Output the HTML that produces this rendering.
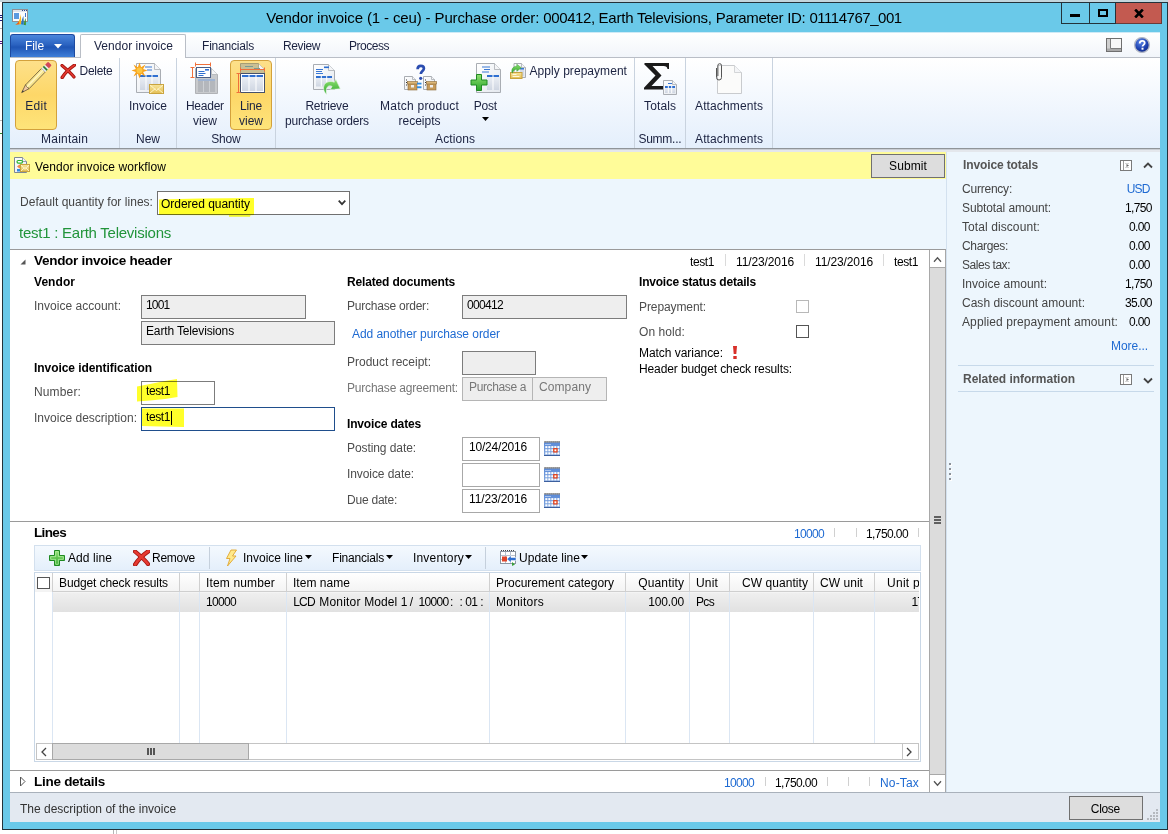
<!DOCTYPE html>
<html lang="en"><head><meta charset="utf-8"><title>Vendor invoice</title>
<style>
html,body{margin:0;padding:0;background:#fff;}
body{width:1168px;height:834px;overflow:hidden;font-family:"Liberation Sans",sans-serif;}
#root{position:relative;width:1168px;height:834px;overflow:hidden;}
#root>div,#root>svg{position:absolute;box-sizing:border-box;}
.t{position:absolute;white-space:pre;}

</style></head>
<body>
<div id="root">
<div style="left:0px;top:0px;width:1168px;height:834px;background:#fff"></div>
<div style="left:0px;top:0px;width:1168px;height:2px;background:#c3d6dd"></div>
<div style="left:0px;top:15px;width:2px;height:1px;background:#1c1c80"></div>
<div style="left:0px;top:17px;width:2px;height:1px;background:#1c1c80"></div>
<div style="left:0px;top:20px;width:2px;height:1px;background:#1c1c80"></div>
<div style="left:0px;top:28px;width:2px;height:1px;background:#b0b0b0"></div>
<div style="left:0px;top:41px;width:2px;height:1px;background:#5a1a8a"></div>
<div style="left:0px;top:43px;width:2px;height:1px;background:#5a1a8a"></div>
<div style="left:0px;top:120px;width:2px;height:1px;background:#b8b8b8"></div>
<div style="left:0px;top:133px;width:2px;height:1px;background:#2a8a2a"></div>
<div style="left:113px;top:830px;width:1px;height:4px;background:#b5b5b5"></div>
<div style="left:116px;top:830px;width:1px;height:4px;background:#c8c8c8"></div>
<div style="left:2px;top:2px;width:1166px;height:828px;background:#6ac9e9;border:1px solid #23323a"></div>
<div style="left:10px;top:33px;width:1150px;height:789px;background:#fff"></div>
<div style="left:1061px;top:3px;width:29px;height:21px;background:#6ac9e9;border:1px solid #23323a;border-top:none"></div>
<div style="left:1089px;top:3px;width:27px;height:21px;background:#6ac9e9;border:1px solid #23323a;border-top:none"></div>
<div style="left:1116px;top:3px;width:46px;height:21px;background:#c35a50;border-bottom:1px solid #6a3a38;border-right:1px solid #6a3a38"></div>
<div style="left:1070px;top:14px;width:10px;height:3px;background:#000"></div>
<div style="left:1098px;top:9px;width:10px;height:8px;border:2px solid #000"></div>
<div style="left:10px;top:32px;width:1150px;height:1px;background:#cfeaf6"></div>
<div style="left:10px;top:33px;width:1150px;height:25px;background:linear-gradient(#fff,#f1f5fa)"></div>
<div style="left:10px;top:57px;width:1150px;height:1px;background:#b9bec6"></div>
<div style="left:10px;top:34px;width:65px;height:23px;background:linear-gradient(#4a86dc,#2a62c0 45%,#1f55b5 55%,#3f7fd8);border:1px solid #1c49a0;border-bottom:none;border-radius:3px 3px 0 0"></div>
<div style="left:80px;top:34px;width:106px;height:24px;background:#fff;border:1px solid #b9bec6;border-bottom:none;border-radius:2px 2px 0 0"></div>
<div style="left:10px;top:58px;width:1150px;height:90px;background:linear-gradient(#ffffff,#f7fafe 30%,#e4effc)"></div>
<div style="left:10px;top:148px;width:1150px;height:1px;background:#8f9499"></div>
<div style="left:10px;top:149px;width:1150px;height:1px;background:#c9cdd3"></div>
<div style="left:10px;top:150px;width:1150px;height:2px;background:#e4e7ec"></div>
<div style="left:119px;top:58px;width:1px;height:90px;background:#c9d3df"></div>
<div style="left:176px;top:58px;width:1px;height:90px;background:#c9d3df"></div>
<div style="left:275px;top:58px;width:1px;height:90px;background:#c9d3df"></div>
<div style="left:634px;top:58px;width:1px;height:90px;background:#c9d3df"></div>
<div style="left:685px;top:58px;width:1px;height:90px;background:#c9d3df"></div>
<div style="left:772px;top:58px;width:1px;height:90px;background:#c9d3df"></div>
<div style="left:15px;top:60px;width:42px;height:70px;background:linear-gradient(#fde08a,#fdd768 50%,#fee47a);border:1px solid #d3a13c;border-radius:4px"></div>
<div style="left:230px;top:60px;width:42px;height:70px;background:linear-gradient(#fde08a,#fdd768 50%,#fee47a);border:1px solid #d3a13c;border-radius:4px"></div>
<div style="left:10px;top:152px;width:936px;height:27px;background:#fffc99"></div>
<div style="left:871px;top:154px;width:74px;height:24px;background:#dddddd;border:1px solid #707070"></div>
<div style="left:10px;top:179px;width:936px;height:70px;background:#edf6fd"></div>
<div style="left:946px;top:152px;width:214px;height:640px;background:#edf6fd"></div>
<div style="left:946px;top:152px;width:1px;height:640px;background:#d3e1ef"></div>
<div style="left:157px;top:191px;width:193px;height:24px;background:#fff;border:1px solid #707070"></div>
<div style="left:10px;top:249px;width:936px;height:1px;background:#9a9a9a"></div>
<div style="left:929px;top:250px;width:17px;height:542px;background:#dcdcdc;border-left:1px solid #a8a8a8;border-right:1px solid #a8a8a8"></div>
<div style="left:930px;top:250px;width:15px;height:17px;background:#fff"></div>
<div style="left:929px;top:267px;width:17px;height:1px;background:#a8a8a8"></div>
<div style="left:930px;top:775px;width:15px;height:17px;background:#fff"></div>
<div style="left:929px;top:774px;width:17px;height:1px;background:#a8a8a8"></div>
<div style="left:934px;top:516px;width:7px;height:2px;background:#606060"></div>
<div style="left:934px;top:519px;width:7px;height:2px;background:#606060"></div>
<div style="left:934px;top:522px;width:7px;height:2px;background:#606060"></div>
<div style="left:725px;top:254px;width:1px;height:12px;background:#dadada"></div>
<div style="left:804px;top:254px;width:1px;height:12px;background:#dadada"></div>
<div style="left:883px;top:254px;width:1px;height:12px;background:#dadada"></div>
<div style="left:141px;top:295px;width:165px;height:24px;background:#eeeeee;border:1px solid #7c7c7c"></div>
<div style="left:141px;top:321px;width:194px;height:24px;background:#eeeeee;border:1px solid #7c7c7c"></div>
<div style="left:141px;top:381px;width:74px;height:24px;background:#fff;border:1px solid #7c7c7c"></div>
<div style="left:141px;top:407px;width:194px;height:24px;background:#fff;border:1px solid #1f4e8c"></div>
<div style="left:171px;top:411px;width:1px;height:14px;background:#000"></div>
<div style="left:462px;top:295px;width:165px;height:24px;background:#eeeeee;border:1px solid #7c7c7c"></div>
<div style="left:462px;top:351px;width:74px;height:24px;background:#eeeeee;border:1px solid #7c7c7c"></div>
<div style="left:462px;top:377px;width:71px;height:24px;background:#eeeeee;border:1px solid #b5b5b5"></div>
<div style="left:532px;top:377px;width:75px;height:24px;background:#eeeeee;border:1px solid #b5b5b5"></div>
<div style="left:462px;top:437px;width:78px;height:24px;background:#fff;border:1px solid #a8a8a8"></div>
<div style="left:462px;top:463px;width:78px;height:24px;background:#fff;border:1px solid #a8a8a8"></div>
<div style="left:462px;top:489px;width:78px;height:24px;background:#fff;border:1px solid #a8a8a8"></div>
<div style="left:796px;top:300px;width:13px;height:13px;background:#fff;border:1px solid #b8b8b8"></div>
<div style="left:796px;top:325px;width:13px;height:13px;background:#fff;border:1px solid #555"></div>
<div style="left:10px;top:521px;width:919px;height:1px;background:#9a9a9a"></div>
<div style="left:834px;top:528px;width:1px;height:9px;background:#d0d0d0"></div>
<div style="left:856px;top:528px;width:1px;height:9px;background:#d0d0d0"></div>
<div style="left:918px;top:528px;width:1px;height:9px;background:#d0d0d0"></div>
<div style="left:34px;top:545px;width:887px;height:26px;background:linear-gradient(#f4f9fe,#e4effb);border:1px solid #d3e0ee"></div>
<div style="left:209px;top:547px;width:1px;height:22px;background:#c5d0dc"></div>
<div style="left:485px;top:547px;width:1px;height:22px;background:#c5d0dc"></div>
<div style="left:34px;top:572px;width:887px;height:190px;background:#fff;border:1px solid #c9d7e6"></div>
<div style="left:35px;top:573px;width:884px;height:19px;background:linear-gradient(#fff,#f3f3f3)"></div>
<div style="left:53px;top:591px;width:866px;height:1px;background:#cfcfcf"></div>
<div style="left:53px;top:592px;width:866px;height:1px;background:#f4f4f4"></div>
<div style="left:53px;top:593px;width:866px;height:19px;background:linear-gradient(#efefef,#e1e1e1)"></div>
<div style="left:52px;top:573px;width:1px;height:19px;background:#d0d0d0"></div>
<div style="left:52px;top:592px;width:1px;height:151px;background:#dbe6f3"></div>
<div style="left:179px;top:573px;width:1px;height:19px;background:#d0d0d0"></div>
<div style="left:179px;top:592px;width:1px;height:151px;background:#dbe6f3"></div>
<div style="left:199px;top:573px;width:1px;height:19px;background:#d0d0d0"></div>
<div style="left:199px;top:592px;width:1px;height:151px;background:#dbe6f3"></div>
<div style="left:286px;top:573px;width:1px;height:19px;background:#d0d0d0"></div>
<div style="left:286px;top:592px;width:1px;height:151px;background:#dbe6f3"></div>
<div style="left:489px;top:573px;width:1px;height:19px;background:#d0d0d0"></div>
<div style="left:489px;top:592px;width:1px;height:151px;background:#dbe6f3"></div>
<div style="left:625px;top:573px;width:1px;height:19px;background:#d0d0d0"></div>
<div style="left:625px;top:592px;width:1px;height:151px;background:#dbe6f3"></div>
<div style="left:689px;top:573px;width:1px;height:19px;background:#d0d0d0"></div>
<div style="left:689px;top:592px;width:1px;height:151px;background:#dbe6f3"></div>
<div style="left:729px;top:573px;width:1px;height:19px;background:#d0d0d0"></div>
<div style="left:729px;top:592px;width:1px;height:151px;background:#dbe6f3"></div>
<div style="left:813px;top:573px;width:1px;height:19px;background:#d0d0d0"></div>
<div style="left:813px;top:592px;width:1px;height:151px;background:#dbe6f3"></div>
<div style="left:874px;top:573px;width:1px;height:19px;background:#d0d0d0"></div>
<div style="left:874px;top:592px;width:1px;height:151px;background:#dbe6f3"></div>
<div style="left:37px;top:577px;width:13px;height:12px;background:#fff;border:1px solid #555"></div>
<div style="left:36px;top:743px;width:883px;height:17px;background:#fff;border:1px solid #c4c4c4"></div>
<div style="left:902px;top:743px;width:17px;height:17px;border:1px solid #c4c4c4"></div>
<div style="left:52px;top:743px;width:197px;height:17px;background:#dcdcdc;border:1px solid #a8a8a8"></div>
<div style="left:147px;top:748px;width:2px;height:7px;background:#555"></div>
<div style="left:150px;top:748px;width:2px;height:7px;background:#555"></div>
<div style="left:153px;top:748px;width:2px;height:7px;background:#555"></div>
<div style="left:10px;top:770px;width:919px;height:1px;background:#9a9a9a"></div>
<div style="left:765px;top:777px;width:1px;height:9px;background:#d0d0d0"></div>
<div style="left:827px;top:777px;width:1px;height:9px;background:#d0d0d0"></div>
<div style="left:848px;top:777px;width:1px;height:9px;background:#d0d0d0"></div>
<div style="left:869px;top:777px;width:1px;height:9px;background:#d0d0d0"></div>
<div style="left:10px;top:792px;width:1150px;height:1px;background:#a9b1bb"></div>
<div style="left:10px;top:793px;width:1150px;height:29px;background:#e3e9f1"></div>
<div style="left:1069px;top:796px;width:74px;height:24px;background:#dddddd;border:1px solid #707070"></div>
<div style="left:1156px;top:809px;width:2px;height:2px;background:#b5b9bf"></div>
<div style="left:1153px;top:812px;width:2px;height:2px;background:#b5b9bf"></div>
<div style="left:1156px;top:812px;width:2px;height:2px;background:#b5b9bf"></div>
<div style="left:1150px;top:815px;width:2px;height:2px;background:#b5b9bf"></div>
<div style="left:1153px;top:815px;width:2px;height:2px;background:#b5b9bf"></div>
<div style="left:1156px;top:815px;width:2px;height:2px;background:#b5b9bf"></div>
<div style="left:1147px;top:818px;width:2px;height:2px;background:#b5b9bf"></div>
<div style="left:1150px;top:818px;width:2px;height:2px;background:#b5b9bf"></div>
<div style="left:1153px;top:818px;width:2px;height:2px;background:#b5b9bf"></div>
<div style="left:1156px;top:818px;width:2px;height:2px;background:#b5b9bf"></div>
<div style="left:958px;top:365px;width:196px;height:1px;background:#c7d9ea"></div>
<div style="left:958px;top:391px;width:196px;height:1px;background:#c7d9ea"></div>
<div style="left:950px;top:464px;width:2px;height:2px;background:#fff"></div>
<div style="left:949px;top:463px;width:2px;height:2px;background:#8b9199"></div>
<div style="left:950px;top:469px;width:2px;height:2px;background:#fff"></div>
<div style="left:949px;top:468px;width:2px;height:2px;background:#8b9199"></div>
<div style="left:950px;top:474px;width:2px;height:2px;background:#fff"></div>
<div style="left:949px;top:473px;width:2px;height:2px;background:#8b9199"></div>
<div style="left:950px;top:479px;width:2px;height:2px;background:#fff"></div>
<div style="left:949px;top:478px;width:2px;height:2px;background:#8b9199"></div>
<svg style="left:1134px;top:9px" width="10" height="9"><path d="M1.200 0.500L8.800 8.500M8.800 0.500L1.200 8.500" stroke="#000" stroke-width="2.600"/></svg>
<svg style="left:54px;top:44px" width="8" height="5"><path d="M0 0h8l-4 4.5z" fill="#fff"/></svg>
<svg style="left:481.500px;top:117px" width="7" height="4"><path d="M0 0h7l-3.500 4z" fill="#000"/></svg>
<svg style="left:0;top:0" width="0" height="0"><defs>
<linearGradient id="gPage" x1="0" y1="0" x2="1" y2="1"><stop offset="0" stop-color="#ffffff"/><stop offset="1" stop-color="#e4e8ee"/></linearGradient>
<linearGradient id="gGreen" x1="0" y1="0" x2="0" y2="1"><stop offset="0" stop-color="#8fe070"/><stop offset="1" stop-color="#2aa52a"/></linearGradient>
<linearGradient id="gRed" x1="0" y1="0" x2="0" y2="1"><stop offset="0" stop-color="#f0504a"/><stop offset="1" stop-color="#c01a12"/></linearGradient>
<linearGradient id="gEnv" x1="0" y1="0" x2="0" y2="1"><stop offset="0" stop-color="#f7e49a"/><stop offset="1" stop-color="#e3bf55"/></linearGradient>
<linearGradient id="gCell" x1="0" y1="0" x2="0" y2="1"><stop offset="0" stop-color="#eef1f6"/><stop offset="1" stop-color="#cfd6e2"/></linearGradient>
<radialGradient id="gHelp" cx="0.4" cy="0.3" r="0.8"><stop offset="0" stop-color="#5c86e8"/><stop offset="0.6" stop-color="#1c3fae"/><stop offset="1" stop-color="#10277a"/></radialGradient>
</defs></svg>
<svg style="left:12px;top:8px" width="17" height="18" viewBox="0 0 17 18" ><rect x="0.500" y="1.500" width="15" height="12" fill="#fbfcfd" stroke="#8f8f94"/><rect x="1" y="2" width="14" height="2" fill="#e1e4ea"/><path d="M10 2.500h1M12 2.500h1M14 2.500h1" stroke="#2b4a8f"/><rect x="2" y="5" width="5" height="6" fill="#5b9ae0"/><rect x="13" y="5" width="1" height="4" fill="#3f78cf"/><path d="M3.500 16.500c3-1 4.500-5 5.200-10.500 0.500 4 0.600 8 0.300 10.300z" fill="#f7b718"/><path d="M3 16.800c1.500-0.600 2.800-2 3.600-3.600l0.800 3z" fill="#ea5a24"/><path d="M9 16.300c0.600-3 1.200-6 2.400-8.300 0.300 3 0.400 6 0.300 8.800z" fill="#2f72b8"/><path d="M11.900 16.800c0.300-2.500 0.800-5 1.700-6.800 0.300 2.500 0.300 5 0.200 7.200z" fill="#3f8f1e"/></svg>
<svg style="left:15px;top:60px" width="42" height="40" viewBox="0 0 42 40" ><g transform="translate(6.7,32.6) rotate(-45.9)"><path d="M0 0l8-2.6v5.2z" fill="#f1c9a1" stroke="#5a4a30" stroke-width="0.7"/><path d="M0 0l2.4-0.8v1.6z" fill="#333"/><rect x="8" y="-2.6" width="23" height="5.2" fill="#f8e58e" stroke="#5a4a30" stroke-width="0.7"/><rect x="8" y="-1" width="23" height="1.4" fill="#fff6c4"/><rect x="31" y="-2.6" width="2" height="5.2" fill="#dfe3ea"/><rect x="33" y="-2.6" width="1.8" height="5.2" fill="#1e7a3a"/><rect x="34.8" y="-2.6" width="1.6" height="5.2" fill="#e8e8ee"/><path d="M36.4 -2.6h3a1.2 1.2 0 0 1 1.2 1.2v2.8a1.2 1.2 0 0 1 -1.2 1.2h-3z" fill="#d2475a"/></g></svg>
<svg style="left:60px;top:64px" width="16" height="15" viewBox="0 0 16 15" ><g fill="none" stroke-linecap="round"><path d="M2 1.500 C5.6 4.5 11.2 9.3 14 13" stroke="#a3150f" stroke-width="3.2"/><path d="M14.5 1.200 C9.6 4.5 4.8 9.3 2.200 13.5" stroke="#a3150f" stroke-width="3.4"/><path d="M2 1.500 C5.6 4.5 11.2 9.3 14 13" stroke="#e63a32" stroke-width="1.4"/><path d="M14.5 1.200 C9.6 4.5 4.8 9.3 2.200 13.5" stroke="#e63a32" stroke-width="1.6"/></g></svg>
<svg style="left:131px;top:62px" width="34" height="33" viewBox="0 0 34 33" ><path d="M5.5 1.5h18l6 6v23h-24z" fill="url(#gPage)" stroke="#a9adb3"/><path d="M23.5 1.5v6h6" fill="#f4f5f7" stroke="#a9adb3" stroke-width="0.8"/><rect x="9" y="13" width="18" height="15" fill="url(#gCell)"/><rect x="9" y="13" width="18" height="2" fill="#2f6fd0"/><rect x="14.5" y="13" width="1" height="15" fill="#fff"/><rect x="20.5" y="13" width="1" height="15" fill="#fff"/><path d="M14 5h7M16 8h5" stroke="#3a78d4" stroke-width="1"/><g transform="translate(8.5,8.5)"><path d="M0 -8L1.6 -3.2L6 -6L3.6 -1.4L8 0L3.6 1.4L6 6L1.6 3.2L0 8L-1.6 3.2L-6 6L-3.6 1.4L-8 0L-3.6 -1.4L-6 -6L-1.6 -3.2Z" fill="#f7a21c"/><circle r="3" fill="#fdc640"/></g><rect x="18.5" y="22.5" width="14" height="9" fill="url(#gEnv)" stroke="#c9a33e"/><path d="M19 23l6.5 5.5l6.5 -5.5M19 31l5.3999999999999995 -4.5M32 31l-5.3999999999999995 -4.5" fill="none" stroke="#fff6cf" stroke-width="0.9"/></svg>
<svg style="left:190px;top:62px" width="30" height="33" viewBox="0 0 30 33" ><path d="M5.5 6.5h16l6 6v19h-22z" fill="#c8cacd" stroke="#b0b2b6"/><path d="M21.5 6.5v6h6" fill="#f4f5f7" stroke="#b0b2b6" stroke-width="0.8"/><rect x="8" y="17" width="17" height="13" fill="#b4b7bc"/><path d="M13.5 17v13M19.5 17v13" stroke="#cdd0d4"/><rect x="8" y="17" width="17" height="2" fill="#9fb4d2"/><rect x="6.5" y="5.500" width="14" height="10" fill="#fff" stroke="#4a5f86"/><rect x="15" y="7" width="4" height="1.6" fill="#2f6fd0"/><path d="M8.500 9.500h6M8.500 11.500h7M8.500 13.500h5" stroke="#2f6fd0" stroke-width="1"/><path d="M5 2.500h16M5.500 0.500v4M20.500 0.500v4M2.500 5v11M0.500 5.500h4M0.500 15.500h4" stroke="#f0703a" stroke-width="1" fill="none"/></svg>
<svg style="left:236px;top:62px" width="30" height="33" viewBox="0 0 30 33" ><path d="M4.5 1.5h18l6 6v9h-24z" fill="#c9bf95" stroke="#a79d74"/><path d="M22.5 1.5v6h6" fill="#f4f5f7" stroke="#a79d74" stroke-width="0.8"/><path d="M9 4.500h8M18 6.500h6" stroke="#7c9a92" stroke-width="1.2"/><rect x="4.500" y="11.500" width="24" height="19" fill="#fff" stroke="#45516b"/><rect x="6" y="13" width="21" height="16" fill="url(#gCell)"/><rect x="6" y="13" width="21" height="2" fill="#2f6fd0"/><rect x="12.5" y="13" width="1" height="16" fill="#fff"/><rect x="19.5" y="13" width="1" height="16" fill="#fff"/><path d="M4 7.500h25M4.500 5.500v4M28.500 5.500v4M2.500 11v20M0.500 11.500h4M0.500 30.500h4" stroke="#f0703a" stroke-width="1" fill="none"/></svg>
<svg style="left:312px;top:63px" width="30" height="33" viewBox="0 0 30 33" ><path d="M1.5 1.5h15l6 6v19h-21z" fill="url(#gPage)" stroke="#a9adb3"/><path d="M16.5 1.5v6h6" fill="#f4f5f7" stroke="#a9adb3" stroke-width="0.8"/><rect x="12" y="3.500" width="5" height="1.600" fill="#2f6fd0"/><path d="M4 6.500h7M4 8.500h6M4 10.500h7" stroke="#3a78d4" stroke-width="1"/><rect x="4" y="13" width="16" height="10.5" fill="url(#gCell)"/><rect x="4" y="13" width="16" height="2" fill="#2f6fd0"/><rect x="8.8" y="13" width="1" height="10.5" fill="#fff"/><rect x="14.2" y="13" width="1" height="10.5" fill="#fff"/><path d="M14.600 31.500C10.500 27.500 10.500 21.500 15 19.300C17.500 18.100 20.500 18.300 22.300 19.300L23.800 16.300L28.300 25.800L18.300 26.600L20.100 23.400C18.500 22.500 16.800 22.600 15.700 23.700C14 25.300 13.900 28.300 14.600 31.500Z" fill="url(#gGreen)" stroke="#eaf7e6" stroke-width="0.600"/></svg>
<svg style="left:402px;top:63px" width="36" height="30" viewBox="0 0 36 30" ><path d="M2.5 13.5h8l3 3v10h-11z" fill="url(#gPage)" stroke="#a9adb3"/><path d="M10.5 13.5v3h3" fill="#f4f5f7" stroke="#a9adb3" stroke-width="0.8"/><path d="M4 17h1M4 19.5h1M4 22h1" stroke="#333" stroke-width="1"/><rect x="6" y="20" width="9" height="7" fill="#c79b5a" stroke="#8a6a3a" stroke-width="0.6"/><rect x="5.5" y="18.5" width="10" height="2.500" fill="#ddb777" stroke="#8a6a3a" stroke-width="0.6"/><rect x="9" y="22" width="3" height="2.500" fill="#eee"/><path d="M21.5 13.5h8l3 3v10h-11z" fill="url(#gPage)" stroke="#a9adb3"/><path d="M29.5 13.5v3h3" fill="#f4f5f7" stroke="#a9adb3" stroke-width="0.8"/><path d="M23 17h1M23 19.5h1M23 22h1" stroke="#333" stroke-width="1"/><rect x="25" y="20" width="9" height="7" fill="#c79b5a" stroke="#8a6a3a" stroke-width="0.6"/><rect x="24.5" y="18.5" width="10" height="2.500" fill="#ddb777" stroke="#8a6a3a" stroke-width="0.6"/><rect x="28" y="22" width="3" height="2.500" fill="#eee"/><path d="M15.600 6.300c0-2.300 1.300-3.500 3.200-3.500 1.900 0 3.100 1.100 3.100 2.700 0 2.500-3.100 2.600-3.100 5.600" fill="none" stroke="#2b4db0" stroke-width="2.700"/><circle cx="18.700" cy="15.300" r="1.600" fill="#2b4db0"/><rect x="15" y="19.700" width="4.500" height="1.800" fill="#2f8ae0"/><rect x="15" y="23.300" width="4.500" height="1.900" fill="#2f8ae0"/></svg>
<svg style="left:470px;top:62px" width="32" height="33" viewBox="0 0 32 33" ><path d="M6.5 1.5h18l6 6v23h-24z" fill="url(#gPage)" stroke="#a9adb3"/><path d="M24.5 1.5v6h6" fill="#f4f5f7" stroke="#a9adb3" stroke-width="0.8"/><path d="M12 5h8M14 7.500h6M12 10h7" stroke="#3a78d4" stroke-width="1"/><rect x="17" y="13" width="12" height="15" fill="url(#gCell)"/><rect x="17" y="13" width="12" height="2" fill="#2f6fd0"/><rect x="22.5" y="13" width="1" height="15" fill="#fff"/><path d="M6.500 12.500h5v5.500h5.500v5h-5.500v5.500h-5v-5.500h-5.500v-5h5.500z" fill="url(#gGreen)" stroke="#1f8a22" stroke-width="1"/></svg>
<svg style="left:510px;top:63px" width="17" height="17" viewBox="0 0 17 17" ><path d="M4.0 0.5h7.5l4 4v10h-11.5z" fill="url(#gPage)" stroke="#a9adb3"/><path d="M11.5 0.5v4h4" fill="#f4f5f7" stroke="#a9adb3" stroke-width="0.8"/><path d="M11 6v7M13 6v7" stroke="#b9c6da" stroke-width="1"/><rect x="10" y="5" width="4" height="1.500" fill="#3a78d4"/><rect x="0.500" y="9.500" width="11.500" height="6" fill="url(#gEnv)" stroke="#c9a33e"/><path d="M2.500 13.500h7M2.500 11.500h4" stroke="#fff8dc" stroke-width="1.100"/><path d="M2.300 10.200C0.800 6.500 3 3.200 6.800 3.300L6.800 1.200L11.300 4.800L6.800 8.300L6.800 6.300C5 6.200 3.500 7.200 2.300 10.200Z" fill="url(#gGreen)" stroke="#3c9a3c" stroke-width="0.500"/></svg>
<svg style="left:644px;top:62px" width="35" height="33" viewBox="0 0 35 33" ><path d="M1 1h24v6h-1.500c-0.500-2.200-1.500-3-4-3h-11l9 9.500-10 10.500h12.500c2.500 0 3.800-1 4.500-3.500h1.500l-1.500 7h-24.500v-1.800l11.500-12.200-11.500-11.500z" fill="#1a1a1a"/><path d="M19.5 18.5h9l4 4v10h-13z" fill="url(#gPage)" stroke="#a9adb3"/><path d="M28.5 18.5v4h4" fill="#f4f5f7" stroke="#a9adb3" stroke-width="0.8"/><rect x="21" y="24" width="10" height="7" fill="url(#gCell)"/><rect x="21" y="24" width="10" height="2" fill="#2f6fd0"/><rect x="23.8" y="24" width="1" height="7" fill="#fff"/><rect x="27.2" y="24" width="1" height="7" fill="#fff"/><path d="M24 21.500h4" stroke="#3a78d4"/></svg>
<svg style="left:713px;top:62px" width="30" height="33" viewBox="0 0 30 33" ><path d="M4.5 3.5h17l7 7v21h-24z" fill="#fbfbfa" stroke="#c9cbce"/><path d="M21.5 3.5v7h7" fill="#f4f5f7" stroke="#c9cbce" stroke-width="0.8"/><path d="M3.500 6v9.500a2.500 2.500 0 0 0 5 0v-12a1.800 1.800 0 0 0 -3.600 0v10.500" fill="none" stroke="#555" stroke-width="1"/></svg>
<svg style="left:14px;top:157px" width="17" height="17" viewBox="0 0 17 17" ><path d="M0.5 0.5h8l4 4v11h-12z" fill="url(#gPage)" stroke="#7d8896"/><path d="M8.5 0.5v4h4" fill="#f4f5f7" stroke="#7d8896" stroke-width="0.8"/><rect x="3" y="3.500" width="5.500" height="2.600" rx="1.300" fill="#fff" stroke="#2bb52b" stroke-width="1.200"/><path d="M5.500 7.500l-2.500 2 2.500 2 2.500-2z" fill="#f08a4a"/><rect x="3" y="12" width="5" height="2.500" fill="#2f8ae0"/><rect x="6.5" y="7.5" width="9" height="7" fill="url(#gEnv)" stroke="#c9a33e"/><path d="M7 8l4.0 4.4l4.0 -4.4M7 14l3.5999999999999996 -3.6M15 14l-3.5999999999999996 -3.6" fill="none" stroke="#fff6cf" stroke-width="0.9"/></svg>
<svg style="left:1106px;top:38px" width="16" height="14" viewBox="0 0 16 14" ><rect x="0.500" y="0.500" width="15" height="13" fill="#f7f7f7" stroke="#6f6f6f"/><rect x="1" y="1" width="3.500" height="12" fill="#cfcfcf"/><rect x="1" y="10.500" width="14" height="2.500" fill="#a9a9a9"/><path d="M4.500 1v9.500h10.500" stroke="#7d7d7d" fill="none"/></svg>
<svg style="left:1133px;top:36px" width="18" height="18" viewBox="0 0 18 18" ><circle cx="9" cy="9" r="7.400" fill="url(#gHelp)" stroke="#b4b9c6" stroke-width="1.400"/><path d="M6.700 7.400c0-1.700 1-2.600 2.500-2.600 1.500 0 2.500 0.900 2.500 2.100 0 1.800-2.200 2-2.200 3.700" fill="none" stroke="#fff" stroke-width="1.800"/><rect x="8.500" y="11.700" width="2" height="2" fill="#fff"/></svg>
<svg style="left:49px;top:550px" width="17" height="16" viewBox="0 0 17 16" ><path d="M5.500 0.500h5v5h5v5h-5v5h-5v-5h-5v-5h5z" fill="url(#gGreen)" stroke="#1f8a22" stroke-width="1"/><path d="M6.700 1.700h2.600v5h5v2.600h-5v5h-2.600v-5h-5v-2.600h5z" fill="none" stroke="#b9f0a6" stroke-width="0.800"/></svg>
<svg style="left:133px;top:550px" width="17" height="16" viewBox="0 0 17 16" ><g fill="none" stroke-linecap="round"><path d="M2 1.500 C5.949999999999999 4.8 11.899999999999999 9.92 15 14" stroke="#a3150f" stroke-width="4.2"/><path d="M15.5 1.200 C10.2 4.8 5.1 9.92 2.200 14.5" stroke="#a3150f" stroke-width="4.4"/><path d="M2 1.500 C5.949999999999999 4.8 11.899999999999999 9.92 15 14" stroke="#e63a32" stroke-width="2.4"/><path d="M15.5 1.200 C10.2 4.8 5.1 9.92 2.200 14.5" stroke="#e63a32" stroke-width="2.6"/></g></svg>
<svg style="left:224px;top:549px" width="15" height="18" viewBox="0 0 15 18" ><path d="M7 1h5.500l-4 6h3.500l-8.500 10 2.500-7.500h-3.500z" fill="#ffe98a" stroke="#e0a52e" stroke-width="0.900"/></svg>
<svg style="left:500px;top:550px" width="18" height="16" viewBox="0 0 18 16" ><rect x="0.500" y="1.500" width="15" height="12" fill="#fff" stroke="#8c96a3"/><path d="M1 0.500h14" stroke="#444" stroke-dasharray="1 1"/><path d="M1 5.500h14M1 9.500h14M5.500 2v11M10.500 2v11" stroke="#b9c2ce"/><rect x="2" y="6.500" width="5" height="5" fill="#e0452a"/><path d="M7 9l4-3.500v2h5v3h-5v2z" fill="#2f6fd0" stroke="#fff" stroke-width="0.500"/><path d="M12 12l3 2.500-3 1.500z" fill="#3aa03a"/></svg>
<svg style="left:0;top:0;mix-blend-mode:multiply" width="400" height="440"><g fill="#ffff2a"><path d="M159 199.500L200 198.500L254 198L254 215L250.500 215.200L250 216.700L229 216.700L229 215.200L159 215Z"/><path d="M137 386.500L150 384L165 381L177 379L177.500 397L165 399L150 400.500L137 401.500Z"/><path d="M142 408.500L184 408.500L184 427L160 426.500L142 426Z"/></g></svg>
<svg style="left:338px;top:200px" width="8" height="6"><path d="M0.700 0.700l3.300 3.500 3.300-3.500" fill="none" stroke="#333" stroke-width="1.700"/></svg>
<svg style="left:933px;top:256px" width="9" height="7"><path d="M1 5.800l3.500-4 3.500 4" fill="none" stroke="#555" stroke-width="1.300"/></svg>
<svg style="left:933px;top:780px" width="9" height="7"><path d="M1 1.200l3.500 4 3.500-4" fill="none" stroke="#555" stroke-width="1.300"/></svg>
<svg style="left:20px;top:259px" width="6" height="6"><path d="M0.500 5.500h5v-5z" fill="#555"/></svg>
<svg style="left:544px;top:441px" width="16" height="15"><defs><linearGradient id="gCal437" x1="0" y1="0" x2="0" y2="1"><stop offset="0" stop-color="#5a8ad8"/><stop offset="1" stop-color="#86a9de"/></linearGradient></defs><rect x="0" y="1.500" width="16" height="13.500" fill="url(#gCal437)"/><rect x="0" y="14" width="16" height="1" fill="#3c5f9e"/><rect x="1" y="3" width="6" height="1" fill="#a9c4ee"/><rect x="1.3" y="5.1" width="2.100" height="2.100" fill="#fff"/><rect x="4.3" y="5.1" width="2.100" height="2.100" fill="#fff"/><rect x="7.3" y="5.1" width="2.100" height="2.100" fill="#fff"/><rect x="10.3" y="5.1" width="2.100" height="2.100" fill="#fff"/><rect x="13.3" y="5.1" width="2.100" height="2.100" fill="#fff"/><rect x="1.3" y="8.2" width="2.100" height="2.100" fill="#fff"/><rect x="4.3" y="8.2" width="2.100" height="2.100" fill="#fff"/><rect x="7.3" y="8.2" width="2.100" height="2.100" fill="#fff"/><rect x="10.3" y="8.2" width="2.100" height="2.100" fill="#fff"/><rect x="13.3" y="8.2" width="2.100" height="2.100" fill="#fff"/><rect x="1.3" y="11.3" width="2.100" height="2.100" fill="#fff"/><rect x="4.3" y="11.3" width="2.100" height="2.100" fill="#fff"/><rect x="7.3" y="11.3" width="2.100" height="2.100" fill="#fff"/><rect x="10.3" y="11.3" width="2.100" height="2.100" fill="#fff"/><rect x="13.3" y="11.3" width="2.100" height="2.100" fill="#fff"/><rect x="9.800" y="7.700" width="3.200" height="3.200" fill="#fff" stroke="#e2421c" stroke-width="1.300"/><rect x="0.5" y="0.200" width="1.100" height="1.400" fill="#222"/><rect x="2.5" y="0.200" width="1.100" height="1.400" fill="#222"/><rect x="4.5" y="0.200" width="1.100" height="1.400" fill="#222"/><rect x="6.5" y="0.200" width="1.100" height="1.400" fill="#222"/><rect x="8.5" y="0.200" width="1.100" height="1.400" fill="#222"/><rect x="10.5" y="0.200" width="1.100" height="1.400" fill="#222"/><rect x="12.5" y="0.200" width="1.100" height="1.400" fill="#222"/><rect x="14.5" y="0.200" width="1.100" height="1.400" fill="#222"/></svg>
<svg style="left:544px;top:467px" width="16" height="15"><defs><linearGradient id="gCal463" x1="0" y1="0" x2="0" y2="1"><stop offset="0" stop-color="#5a8ad8"/><stop offset="1" stop-color="#86a9de"/></linearGradient></defs><rect x="0" y="1.500" width="16" height="13.500" fill="url(#gCal463)"/><rect x="0" y="14" width="16" height="1" fill="#3c5f9e"/><rect x="1" y="3" width="6" height="1" fill="#a9c4ee"/><rect x="1.3" y="5.1" width="2.100" height="2.100" fill="#fff"/><rect x="4.3" y="5.1" width="2.100" height="2.100" fill="#fff"/><rect x="7.3" y="5.1" width="2.100" height="2.100" fill="#fff"/><rect x="10.3" y="5.1" width="2.100" height="2.100" fill="#fff"/><rect x="13.3" y="5.1" width="2.100" height="2.100" fill="#fff"/><rect x="1.3" y="8.2" width="2.100" height="2.100" fill="#fff"/><rect x="4.3" y="8.2" width="2.100" height="2.100" fill="#fff"/><rect x="7.3" y="8.2" width="2.100" height="2.100" fill="#fff"/><rect x="10.3" y="8.2" width="2.100" height="2.100" fill="#fff"/><rect x="13.3" y="8.2" width="2.100" height="2.100" fill="#fff"/><rect x="1.3" y="11.3" width="2.100" height="2.100" fill="#fff"/><rect x="4.3" y="11.3" width="2.100" height="2.100" fill="#fff"/><rect x="7.3" y="11.3" width="2.100" height="2.100" fill="#fff"/><rect x="10.3" y="11.3" width="2.100" height="2.100" fill="#fff"/><rect x="13.3" y="11.3" width="2.100" height="2.100" fill="#fff"/><rect x="9.800" y="7.700" width="3.200" height="3.200" fill="#fff" stroke="#e2421c" stroke-width="1.300"/><rect x="0.5" y="0.200" width="1.100" height="1.400" fill="#222"/><rect x="2.5" y="0.200" width="1.100" height="1.400" fill="#222"/><rect x="4.5" y="0.200" width="1.100" height="1.400" fill="#222"/><rect x="6.5" y="0.200" width="1.100" height="1.400" fill="#222"/><rect x="8.5" y="0.200" width="1.100" height="1.400" fill="#222"/><rect x="10.5" y="0.200" width="1.100" height="1.400" fill="#222"/><rect x="12.5" y="0.200" width="1.100" height="1.400" fill="#222"/><rect x="14.5" y="0.200" width="1.100" height="1.400" fill="#222"/></svg>
<svg style="left:544px;top:493px" width="16" height="15"><defs><linearGradient id="gCal489" x1="0" y1="0" x2="0" y2="1"><stop offset="0" stop-color="#5a8ad8"/><stop offset="1" stop-color="#86a9de"/></linearGradient></defs><rect x="0" y="1.500" width="16" height="13.500" fill="url(#gCal489)"/><rect x="0" y="14" width="16" height="1" fill="#3c5f9e"/><rect x="1" y="3" width="6" height="1" fill="#a9c4ee"/><rect x="1.3" y="5.1" width="2.100" height="2.100" fill="#fff"/><rect x="4.3" y="5.1" width="2.100" height="2.100" fill="#fff"/><rect x="7.3" y="5.1" width="2.100" height="2.100" fill="#fff"/><rect x="10.3" y="5.1" width="2.100" height="2.100" fill="#fff"/><rect x="13.3" y="5.1" width="2.100" height="2.100" fill="#fff"/><rect x="1.3" y="8.2" width="2.100" height="2.100" fill="#fff"/><rect x="4.3" y="8.2" width="2.100" height="2.100" fill="#fff"/><rect x="7.3" y="8.2" width="2.100" height="2.100" fill="#fff"/><rect x="10.3" y="8.2" width="2.100" height="2.100" fill="#fff"/><rect x="13.3" y="8.2" width="2.100" height="2.100" fill="#fff"/><rect x="1.3" y="11.3" width="2.100" height="2.100" fill="#fff"/><rect x="4.3" y="11.3" width="2.100" height="2.100" fill="#fff"/><rect x="7.3" y="11.3" width="2.100" height="2.100" fill="#fff"/><rect x="10.3" y="11.3" width="2.100" height="2.100" fill="#fff"/><rect x="13.3" y="11.3" width="2.100" height="2.100" fill="#fff"/><rect x="9.800" y="7.700" width="3.200" height="3.200" fill="#fff" stroke="#e2421c" stroke-width="1.300"/><rect x="0.5" y="0.200" width="1.100" height="1.400" fill="#222"/><rect x="2.5" y="0.200" width="1.100" height="1.400" fill="#222"/><rect x="4.5" y="0.200" width="1.100" height="1.400" fill="#222"/><rect x="6.5" y="0.200" width="1.100" height="1.400" fill="#222"/><rect x="8.5" y="0.200" width="1.100" height="1.400" fill="#222"/><rect x="10.5" y="0.200" width="1.100" height="1.400" fill="#222"/><rect x="12.5" y="0.200" width="1.100" height="1.400" fill="#222"/><rect x="14.5" y="0.200" width="1.100" height="1.400" fill="#222"/></svg>
<svg style="left:732px;top:346px" width="6" height="13"><path d="M1 0h4l-0.7 8h-2.6z" fill="#d8302a"/><rect x="1.3" y="10" width="3.4" height="3" fill="#d8302a"/></svg>
<svg style="left:305px;top:555px" width="7" height="4"><path d="M0 0h7l-3.5 4z" fill="#000"/></svg>
<svg style="left:386px;top:555px" width="7" height="4"><path d="M0 0h7l-3.5 4z" fill="#000"/></svg>
<svg style="left:465px;top:555px" width="7" height="4"><path d="M0 0h7l-3.5 4z" fill="#000"/></svg>
<svg style="left:581px;top:555px" width="7" height="4"><path d="M0 0h7l-3.5 4z" fill="#000"/></svg>
<svg style="left:41px;top:747px" width="6" height="10"><path d="M5 1l-4 4 4 4" fill="none" stroke="#444" stroke-width="1.3"/></svg>
<svg style="left:906px;top:747px" width="6" height="10"><path d="M1 1l4 4-4 4" fill="none" stroke="#444" stroke-width="1.3"/></svg>
<svg style="left:19px;top:776px" width="8" height="11"><path d="M1.5 1l4.5 4.5-4.5 4.5z" fill="#fff" stroke="#555" stroke-width="1"/></svg>
<svg style="left:1120px;top:160px" width="13" height="12"><rect x="0.500" y="0.500" width="11" height="10" fill="#fff" stroke="#7a7a7a"/><path d="M3.500 1v9" stroke="#9a9a9a"/><path d="M5.500 3.500h4M5.500 7.500h4" stroke="#aaa" stroke-dasharray="1 1"/><path d="M6.500 4l2.500 1.500-2.500 1.500z" fill="#666"/></svg>
<svg style="left:1120px;top:374px" width="13" height="12"><rect x="0.500" y="0.500" width="11" height="10" fill="#fff" stroke="#7a7a7a"/><path d="M3.500 1v9" stroke="#9a9a9a"/><path d="M5.500 3.500h4M5.500 7.500h4" stroke="#aaa" stroke-dasharray="1 1"/><path d="M6.500 4l2.500 1.500-2.500 1.500z" fill="#666"/></svg>
<svg style="left:1143px;top:162px" width="10" height="7"><path d="M1 5.5l4-4 4 4" fill="none" stroke="#444" stroke-width="1.8"/></svg>
<svg style="left:1143px;top:377px" width="10" height="7"><path d="M1 1.5l4 4 4-4" fill="none" stroke="#444" stroke-width="1.8"/></svg>
<span class="t" style="left:266.30px;top:10.30px;font-size:15px;line-height:15px;letter-spacing:-0.131px;">Vendor invoice (1 - ceu) - Purchase order: </span>
<span class="t" style="left:543.30px;top:10.30px;font-size:15px;line-height:15px;letter-spacing:-0.386px;">000412, </span>
<span class="t" style="left:598.60px;top:10.30px;font-size:15px;line-height:15px;letter-spacing:-0.229px;">Earth Televisions, </span>
<span class="t" style="left:715.70px;top:10.30px;font-size:15px;line-height:15px;letter-spacing:-0.274px;">Parameter ID: </span>
<span class="t" style="left:809.40px;top:10.30px;font-size:15px;line-height:15px;letter-spacing:-0.466px;">01114767_001</span>
<span class="t" style="left:25.00px;top:39.84px;font-size:12px;line-height:12px;color:#fff;letter-spacing:-0.086px;">File</span>
<span class="t" style="left:94.00px;top:39.84px;font-size:12px;line-height:12px;color:#1b2240;letter-spacing:0.019px;">Vendor invoice</span>
<span class="t" style="left:202.00px;top:39.84px;font-size:12px;line-height:12px;color:#1b2240;letter-spacing:-0.203px;">Financials</span>
<span class="t" style="left:283.00px;top:39.84px;font-size:12px;line-height:12px;color:#1b2240;letter-spacing:-0.393px;">Review</span>
<span class="t" style="left:349.00px;top:39.84px;font-size:12px;line-height:12px;color:#1b2240;letter-spacing:-0.480px;">Process</span>
<span class="t" style="left:25.16px;top:99.84px;font-size:12px;line-height:12px;color:#1b2240;letter-spacing:0.328px;">Edit</span>
<span class="t" style="left:79.50px;top:64.84px;font-size:12px;line-height:12px;color:#1b2240;letter-spacing:-0.281px;">Delete</span>
<span class="t" style="left:129.00px;top:99.84px;font-size:12px;line-height:12px;color:#1b2240;">Invoice</span>
<span class="t" style="left:185.89px;top:99.84px;font-size:12px;line-height:12px;color:#1b2240;letter-spacing:-0.227px;">Header</span>
<span class="t" style="left:193.00px;top:114.84px;font-size:12px;line-height:12px;color:#1b2240;">view</span>
<span class="t" style="left:239.91px;top:99.84px;font-size:12px;line-height:12px;color:#1b2240;letter-spacing:-0.172px;">Line</span>
<span class="t" style="left:239.00px;top:114.84px;font-size:12px;line-height:12px;color:#1b2240;">view</span>
<span class="t" style="left:305.39px;top:99.84px;font-size:12px;line-height:12px;color:#1b2240;letter-spacing:-0.211px;">Retrieve</span>
<span class="t" style="left:284.91px;top:114.84px;font-size:12px;line-height:12px;color:#1b2240;letter-spacing:-0.181px;">purchase orders</span>
<span class="t" style="left:380.11px;top:99.84px;font-size:12px;line-height:12px;color:#1b2240;letter-spacing:0.227px;">Match product</span>
<span class="t" style="left:398.50px;top:114.84px;font-size:12px;line-height:12px;color:#1b2240;">receipts</span>
<span class="t" style="left:473.87px;top:99.84px;font-size:12px;line-height:12px;color:#1b2240;letter-spacing:-0.254px;">Post</span>
<span class="t" style="left:529.50px;top:64.84px;font-size:12px;line-height:12px;color:#1b2240;letter-spacing:0.048px;">Apply prepayment</span>
<span class="t" style="left:644.05px;top:99.84px;font-size:12px;line-height:12px;color:#1b2240;letter-spacing:0.107px;">Totals</span>
<span class="t" style="left:695.06px;top:99.84px;font-size:12px;line-height:12px;color:#1b2240;letter-spacing:0.118px;">Attachments</span>
<span class="t" style="left:41.10px;top:132.84px;font-size:12px;line-height:12px;color:#1b2240;letter-spacing:0.205px;">Maintain</span>
<span class="t" style="left:136.00px;top:132.84px;font-size:12px;line-height:12px;color:#1b2240;letter-spacing:-0.005px;">New</span>
<span class="t" style="left:211.37px;top:132.84px;font-size:12px;line-height:12px;color:#1b2240;letter-spacing:-0.258px;">Show</span>
<span class="t" style="left:435.05px;top:132.84px;font-size:12px;line-height:12px;color:#1b2240;letter-spacing:0.092px;">Actions</span>
<span class="t" style="left:638.38px;top:132.84px;font-size:12px;line-height:12px;color:#1b2240;letter-spacing:-0.239px;">Summ...</span>
<span class="t" style="left:695.06px;top:132.84px;font-size:12px;line-height:12px;color:#1b2240;letter-spacing:0.118px;">Attachments</span>
<span class="t" style="left:35.00px;top:160.84px;font-size:12px;line-height:12px;letter-spacing:0.099px;">Vendor invoice workflow</span>
<span class="t" style="left:889.05px;top:159.84px;font-size:12px;line-height:12px;letter-spacing:0.107px;">Submit</span>
<span class="t" style="left:20.00px;top:195.84px;font-size:12px;line-height:12px;color:#444;letter-spacing:0.034px;">Default quantity for lines:</span>
<span class="t" style="left:161.00px;top:197.84px;font-size:12px;line-height:12px;letter-spacing:-0.024px;">Ordered quantity</span>
<span class="t" style="left:19.00px;top:225.30px;font-size:15px;line-height:15px;color:#21943a;letter-spacing:-0.246px;">test1 : Earth Televisions</span>
<span class="t" style="left:34.00px;top:253.57px;font-size:13.5px;line-height:13.5px;font-weight:700;letter-spacing:-0.289px;">Vendor invoice header</span>
<span class="t" style="left:690.00px;top:255.84px;font-size:12px;line-height:12px;letter-spacing:-0.403px;">test1</span>
<span class="t" style="left:736.00px;top:255.84px;font-size:12px;line-height:12px;letter-spacing:-0.117px;">11/23/2016</span>
<span class="t" style="left:815.00px;top:255.84px;font-size:12px;line-height:12px;letter-spacing:-0.117px;">11/23/2016</span>
<span class="t" style="left:894.00px;top:255.84px;font-size:12px;line-height:12px;letter-spacing:-0.403px;">test1</span>
<span class="t" style="left:34.00px;top:275.84px;font-size:12px;line-height:12px;font-weight:700;letter-spacing:0.052px;">Vendor</span>
<span class="t" style="left:34.00px;top:299.84px;font-size:12px;line-height:12px;color:#4d4d4d;letter-spacing:0.018px;">Invoice account:</span>
<span class="t" style="left:146.00px;top:298.84px;font-size:12px;line-height:12px;letter-spacing:-0.800px;">1001</span>
<span class="t" style="left:146.00px;top:324.84px;font-size:12px;line-height:12px;letter-spacing:-0.147px;">Earth Televisions</span>
<span class="t" style="left:34.00px;top:361.84px;font-size:12px;line-height:12px;font-weight:700;letter-spacing:-0.062px;">Invoice identification</span>
<span class="t" style="left:34.00px;top:385.84px;font-size:12px;line-height:12px;color:#4d4d4d;letter-spacing:0.141px;">Number:</span>
<span class="t" style="left:146.00px;top:384.84px;font-size:12px;line-height:12px;letter-spacing:-0.403px;">test1</span>
<span class="t" style="left:34.00px;top:411.84px;font-size:12px;line-height:12px;color:#4d4d4d;letter-spacing:0.013px;">Invoice description:</span>
<span class="t" style="left:146.00px;top:410.84px;font-size:12px;line-height:12px;letter-spacing:-0.403px;">test1</span>
<span class="t" style="left:347.00px;top:275.84px;font-size:12px;line-height:12px;font-weight:700;letter-spacing:-0.159px;">Related documents</span>
<span class="t" style="left:347.00px;top:299.84px;font-size:12px;line-height:12px;color:#4d4d4d;letter-spacing:-0.226px;">Purchase order:</span>
<span class="t" style="left:467.00px;top:298.84px;font-size:12px;line-height:12px;letter-spacing:-0.674px;">000412</span>
<span class="t" style="left:352.00px;top:327.84px;font-size:12px;line-height:12px;color:#1e6ad2;letter-spacing:-0.055px;">Add another purchase order</span>
<span class="t" style="left:347.00px;top:355.84px;font-size:12px;line-height:12px;color:#4d4d4d;">Product receipt:</span>
<span class="t" style="left:347.00px;top:381.84px;font-size:12px;line-height:12px;color:#777;letter-spacing:-0.197px;">Purchase agreement:</span>
<span class="t" style="left:469.00px;top:380.84px;font-size:12px;line-height:12px;color:#777;letter-spacing:-0.370px;">Purchase a</span>
<span class="t" style="left:539.00px;top:380.84px;font-size:12px;line-height:12px;color:#777;letter-spacing:0.092px;">Company</span>
<span class="t" style="left:347.00px;top:417.84px;font-size:12px;line-height:12px;font-weight:700;letter-spacing:-0.156px;">Invoice dates</span>
<span class="t" style="left:347.00px;top:441.84px;font-size:12px;line-height:12px;color:#4d4d4d;letter-spacing:-0.082px;">Posting date:</span>
<span class="t" style="left:347.00px;top:467.84px;font-size:12px;line-height:12px;color:#4d4d4d;letter-spacing:-0.081px;">Invoice date:</span>
<span class="t" style="left:347.00px;top:493.84px;font-size:12px;line-height:12px;color:#4d4d4d;letter-spacing:-0.227px;">Due date:</span>
<span class="t" style="left:469.00px;top:440.84px;font-size:12px;line-height:12px;letter-spacing:-0.206px;">10/24/2016</span>
<span class="t" style="left:469.00px;top:492.84px;font-size:12px;line-height:12px;letter-spacing:-0.117px;">11/23/2016</span>
<span class="t" style="left:639.00px;top:275.84px;font-size:12px;line-height:12px;font-weight:700;letter-spacing:-0.200px;">Invoice status details</span>
<span class="t" style="left:639.00px;top:300.84px;font-size:12px;line-height:12px;color:#4d4d4d;letter-spacing:-0.095px;">Prepayment:</span>
<span class="t" style="left:639.00px;top:325.84px;font-size:12px;line-height:12px;color:#4d4d4d;letter-spacing:0.078px;">On hold:</span>
<span class="t" style="left:639.00px;top:346.84px;font-size:12px;line-height:12px;letter-spacing:-0.047px;">Match variance:</span>
<span class="t" style="left:639.00px;top:362.84px;font-size:12px;line-height:12px;letter-spacing:-0.110px;">Header budget check results:</span>
<span class="t" style="left:34.00px;top:525.57px;font-size:13.5px;line-height:13.5px;font-weight:700;letter-spacing:-0.653px;">Lines</span>
<span class="t" style="left:794.00px;top:527.84px;font-size:12px;line-height:12px;color:#1e6ad2;letter-spacing:-0.675px;">10000</span>
<span class="t" style="left:866.00px;top:527.84px;font-size:12px;line-height:12px;letter-spacing:-0.590px;">1,750.00</span>
<span class="t" style="left:68.00px;top:551.84px;font-size:12px;line-height:12px;letter-spacing:0.078px;">Add line</span>
<span class="t" style="left:152.00px;top:551.84px;font-size:12px;line-height:12px;letter-spacing:-0.281px;">Remove</span>
<span class="t" style="left:243.00px;top:551.84px;font-size:12px;line-height:12px;">Invoice line</span>
<span class="t" style="left:332.00px;top:551.84px;font-size:12px;line-height:12px;letter-spacing:-0.203px;">Financials</span>
<span class="t" style="left:413.00px;top:551.84px;font-size:12px;line-height:12px;letter-spacing:0.182px;">Inventory</span>
<span class="t" style="left:519.00px;top:551.84px;font-size:12px;line-height:12px;letter-spacing:0.026px;">Update line</span>
<span class="t" style="left:59.00px;top:576.84px;font-size:12px;line-height:12px;letter-spacing:-0.120px;">Budget check results</span>
<span class="t" style="left:206.00px;top:576.84px;font-size:12px;line-height:12px;letter-spacing:0.149px;">Item number</span>
<span class="t" style="left:293.00px;top:576.84px;font-size:12px;line-height:12px;letter-spacing:0.033px;">Item name</span>
<span class="t" style="left:496.00px;top:576.84px;font-size:12px;line-height:12px;">Procurement category</span>
<span class="t" style="left:638.16px;top:576.84px;font-size:12px;line-height:12px;letter-spacing:0.162px;">Quantity</span>
<span class="t" style="left:696.00px;top:576.84px;font-size:12px;line-height:12px;letter-spacing:0.164px;">Unit</span>
<span class="t" style="left:742.06px;top:576.84px;font-size:12px;line-height:12px;letter-spacing:0.058px;">CW quantity</span>
<span class="t" style="left:820.00px;top:576.84px;font-size:12px;line-height:12px;letter-spacing:0.045px;">CW unit</span>
<span class="t" style="left:887.00px;top:576.84px;font-size:12px;line-height:12px;letter-spacing:0.273px;width:32px;overflow:hidden;">Unit p</span>
<span class="t" style="left:206.00px;top:595.84px;font-size:12px;line-height:12px;letter-spacing:-0.675px;">10000</span>
<span class="t" style="left:293.20px;top:595.84px;font-size:12px;line-height:12px;letter-spacing:-0.800px;">LCD</span>
<span class="t" style="left:319.30px;top:595.84px;font-size:12px;line-height:12px;letter-spacing:0.183px;">Monitor</span>
<span class="t" style="left:364.20px;top:595.84px;font-size:12px;line-height:12px;letter-spacing:0.062px;">Model</span>
<span class="t" style="left:400.80px;top:595.84px;font-size:12px;line-height:12px;">1</span>
<span class="t" style="left:409.70px;top:595.84px;font-size:12px;line-height:12px;">/</span>
<span class="t" style="left:418.40px;top:595.84px;font-size:12px;line-height:12px;letter-spacing:-0.675px;">10000</span>
<span class="t" style="left:450.00px;top:595.84px;font-size:12px;line-height:12px;">:</span>
<span class="t" style="left:459.40px;top:595.84px;font-size:12px;line-height:12px;">:</span>
<span class="t" style="left:465.30px;top:595.84px;font-size:12px;line-height:12px;letter-spacing:-0.680px;">01</span>
<span class="t" style="left:480.20px;top:595.84px;font-size:12px;line-height:12px;">:</span>
<span class="t" style="left:496.00px;top:595.84px;font-size:12px;line-height:12px;letter-spacing:0.248px;">Monitors</span>
<span class="t" style="left:648.18px;top:595.84px;font-size:12px;line-height:12px;letter-spacing:-0.117px;">100.00</span>
<span class="t" style="left:696.00px;top:595.84px;font-size:12px;line-height:12px;letter-spacing:-0.672px;">Pcs</span>
<span class="t" style="left:911.50px;top:595.84px;font-size:12px;line-height:12px;letter-spacing:-0.800px;width:7px;overflow:hidden;">17</span>
<span class="t" style="left:34.00px;top:774.57px;font-size:13.5px;line-height:13.5px;font-weight:700;letter-spacing:-0.273px;">Line details</span>
<span class="t" style="left:724.00px;top:776.84px;font-size:12px;line-height:12px;color:#1e6ad2;letter-spacing:-0.675px;">10000</span>
<span class="t" style="left:775.00px;top:776.84px;font-size:12px;line-height:12px;letter-spacing:-0.590px;">1,750.00</span>
<span class="t" style="left:880.00px;top:776.84px;font-size:12px;line-height:12px;color:#1e6ad2;letter-spacing:0.164px;">No-Tax</span>
<span class="t" style="left:20.00px;top:802.84px;font-size:12px;line-height:12px;color:#333;">The description of the invoice</span>
<span class="t" style="left:1090.83px;top:802.84px;font-size:12px;line-height:12px;letter-spacing:-0.338px;">Close</span>
<span class="t" style="left:963.00px;top:158.84px;font-size:12px;line-height:12px;font-weight:700;color:#555;letter-spacing:-0.121px;">Invoice totals</span>
<span class="t" style="left:963.00px;top:372.84px;font-size:12px;line-height:12px;font-weight:700;color:#555;letter-spacing:-0.036px;">Related information</span>
<span class="t" style="left:962.00px;top:182.84px;font-size:12px;line-height:12px;color:#444;letter-spacing:-0.224px;">Currency:</span>
<span class="t" style="left:1126.76px;top:182.84px;font-size:12px;line-height:12px;color:#1e6ad2;letter-spacing:-0.800px;">USD</span>
<span class="t" style="left:962.00px;top:201.84px;font-size:12px;line-height:12px;color:#444;letter-spacing:-0.108px;">Subtotal amount:</span>
<span class="t" style="left:1124.89px;top:201.84px;font-size:12px;line-height:12px;letter-spacing:-0.606px;">1,750</span>
<span class="t" style="left:962.00px;top:220.84px;font-size:12px;line-height:12px;color:#444;letter-spacing:0.085px;">Total discount:</span>
<span class="t" style="left:1128.91px;top:220.84px;font-size:12px;line-height:12px;letter-spacing:-0.590px;">0.00</span>
<span class="t" style="left:962.00px;top:239.84px;font-size:12px;line-height:12px;color:#444;letter-spacing:-0.338px;">Charges:</span>
<span class="t" style="left:1128.91px;top:239.84px;font-size:12px;line-height:12px;letter-spacing:-0.590px;">0.00</span>
<span class="t" style="left:962.00px;top:258.84px;font-size:12px;line-height:12px;color:#444;letter-spacing:-0.470px;">Sales tax:</span>
<span class="t" style="left:1128.91px;top:258.84px;font-size:12px;line-height:12px;letter-spacing:-0.590px;">0.00</span>
<span class="t" style="left:962.00px;top:277.84px;font-size:12px;line-height:12px;color:#444;letter-spacing:0.019px;">Invoice amount:</span>
<span class="t" style="left:1124.89px;top:277.84px;font-size:12px;line-height:12px;letter-spacing:-0.606px;">1,750</span>
<span class="t" style="left:962.00px;top:296.84px;font-size:12px;line-height:12px;color:#444;letter-spacing:0.012px;">Cash discount amount:</span>
<span class="t" style="left:1124.89px;top:296.84px;font-size:12px;line-height:12px;letter-spacing:-0.606px;">35.00</span>
<span class="t" style="left:962.00px;top:315.84px;font-size:12px;line-height:12px;color:#444;letter-spacing:0.099px;">Applied prepayment amount:</span>
<span class="t" style="left:1128.91px;top:315.84px;font-size:12px;line-height:12px;letter-spacing:-0.590px;">0.00</span>
<span class="t" style="left:1111.00px;top:339.84px;font-size:12px;line-height:12px;color:#1e6ad2;letter-spacing:-0.049px;">More...</span>
</div>
</body></html>
